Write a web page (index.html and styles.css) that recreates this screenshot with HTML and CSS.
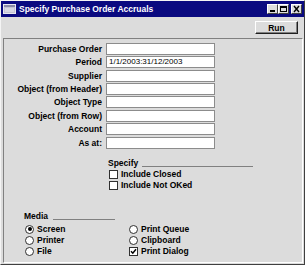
FILE: index.html
```html
<!DOCTYPE html>
<html lang="en">
<head>
    <meta charset="UTF-8">
    <meta name="viewport" content="width=device-width, initial-scale=1.0">
    <title>Specify Purchase Order Accruals</title>
    <link rel="stylesheet" href="styles.css">
</head>
<body>
    <div class="window">
        <div class="titlebar">
            <svg class="app-icon" viewBox="0 0 13 10">
                <rect x="0.5" y="0.5" width="12" height="9" fill="#c4c4d4" stroke="#e8e8f0"/>
                <rect x="1" y="1" width="11" height="2" fill="#8a8aa8"/>
                <rect x="2" y="4" width="9" height="4" fill="#d8d8e4"/>
            </svg>
            <span class="title">Specify Purchase Order Accruals</span>
            <div class="caption-buttons">
                <span class="cap-btn"><svg viewBox="0 0 9 8"><rect x="2" y="5" width="5" height="2" fill="#000"/></svg></span>
                <span class="cap-btn"><svg viewBox="0 0 9 8"><rect x="1.5" y="1.5" width="6" height="5" fill="none" stroke="#000"/><rect x="1" y="1" width="7" height="2" fill="#000"/></svg></span>
                <span class="cap-btn close"><svg viewBox="0 0 9 8"><path d="M2 1 L7 7 M7 1 L2 7" stroke="#000" stroke-width="1.4"/></svg></span>
            </div>
        </div>

        <div class="frame">
            <div class="toolbar">
                <button class="run">Run</button>
            </div>

            <div class="panel">
                <div class="fields">
                    <label>Purchase Order</label><span class="field"></span>
                    <label>Period</label><span class="field">1/1/2003:31/12/2003</span>
                    <label>Supplier</label><span class="field"></span>
                    <label>Object (from Header)</label><span class="field"></span>
                    <label>Object Type</label><span class="field"></span>
                    <label>Object (from Row)</label><span class="field"></span>
                    <label>Account</label><span class="field"></span>
                    <label>As at:</label><span class="field"></span>
                </div>

                <div class="group specify">
                    <div class="group-head"><span>Specify</span><i class="rule"></i></div>
                    <div class="option"><span class="box"></span>Include Closed</div>
                    <div class="option"><span class="box"></span>Include Not OKed</div>
                </div>

                <div class="group media">
                    <div class="group-head"><span>Media</span><i class="rule"></i></div>
                    <div class="media-grid">
                        <div class="option"><span class="radio on"></span>Screen</div>
                        <div class="option"><span class="radio"></span>Printer</div>
                        <div class="option"><span class="radio"></span>File</div>
                        <div class="option"><span class="radio"></span>Print Queue</div>
                        <div class="option"><span class="radio"></span>Clipboard</div>
                        <div class="option"><span class="box"><svg viewBox="0 0 7 7"><path d="M1 3.2 L2.8 5.2 L6 1.2" fill="none" stroke="#000" stroke-width="1.5"/></svg></span>Print Dialog</div>
                    </div>
                </div>
            </div>
        </div>
    </div>
</body>
</html>
```

FILE: styles.css
```css
* {
    box-sizing: border-box;
}
body {
    margin: 0;
    background: #dcdcdc;
    font-family: "Liberation Sans", Arial, sans-serif;
    font-size: 8.5px;
    font-weight: bold;
    color: #000;
}
.window {
    width: 305px;
    height: 265px;
    border: 1px solid;
    border-color: #f4f4f4 #404040 #404040 #f4f4f4;
    display: flex;
    flex-direction: column;
}
.titlebar {
    height: 16px;
    background: #0a0a80;
    color: #fff;
    display: flex;
    align-items: center;
    padding: 0 2px;
}
.app-icon {
    width: 13px;
    height: 10px;
    margin-right: 3px;
}
.title {
    flex: 1;
    font-size: 8.5px;
}
.caption-buttons {
    display: flex;
}
.cap-btn {
    width: 11px;
    height: 10px;
    background: #dcdcdc;
    border: 1px solid;
    border-color: #fff #404040 #404040 #fff;
    display: flex;
}
.cap-btn svg {
    width: 9px;
    height: 8px;
}
.cap-btn.close {
    margin-left: 2px;
}
.frame {
    flex: 1;
    display: flex;
    flex-direction: column;
    padding: 0 1px 1px 2px;
}
.toolbar {
    height: 21px;
    display: flex;
    justify-content: flex-end;
    align-items: flex-start;
    padding: 4px 5px 0 0;
}
.run {
    width: 43px;
    height: 13px;
    padding: 0;
    font: inherit;
    background: #dcdcdc;
    border: 1px solid;
    border-color: #fff #202020 #202020 #fff;
    box-shadow: inset -1px -1px 0 #808080;
}
.panel {
    flex: 1;
    border: 1px solid;
    border-color: #808080 #fff #fff #808080;
    padding-top: 3px;
}
.fields {
    display: grid;
    grid-template-columns: 98px 109px;
    grid-auto-rows: 13.43px;
    column-gap: 4px;
    align-items: center;
}
.fields label {
    text-align: right;
    white-space: nowrap;
}
.field {
    height: 12px;
    background: #fff;
    border: 1px solid #8c8c8c;
    padding-left: 2px;
    font-size: 8px;
    font-weight: normal;
    line-height: 10px;
}
.group-head {
    display: flex;
    height: 11px;
    line-height: 11px;
}
.rule {
    flex: 1;
    height: 1px;
    margin-top: 8px;
    background: #808080;
}
.specify {
    width: 145px;
    margin: 8.5px 0 0 104px;
}
.specify .rule {
    margin-left: 4px;
}
.media {
    margin: 20px 0 0 20px;
}
.media .group-head {
    width: 91px;
}
.media .rule {
    margin-left: 5px;
}
.option {
    height: 11px;
    display: flex;
    align-items: center;
    white-space: nowrap;
}
.box {
    width: 9px;
    height: 9px;
    margin: 0 3px 0 1px;
    background: #fff;
    border: 1px solid #303030;
    display: flex;
}
.box svg {
    width: 7px;
    height: 7px;
}
.radio {
    width: 9px;
    height: 9px;
    margin: 0 3px 0 1px;
    background: #fff;
    border: 1px solid #303030;
    border-radius: 50%;
    display: flex;
    align-items: center;
    justify-content: center;
}
.radio.on::after {
    content: "";
    width: 4px;
    height: 4px;
    border-radius: 50%;
    background: #000;
}
.media-grid {
    margin-top: 2px;
    display: grid;
    grid-template-columns: 104px auto;
    grid-template-rows: repeat(3, 11px);
    grid-auto-flow: column;
}
```
